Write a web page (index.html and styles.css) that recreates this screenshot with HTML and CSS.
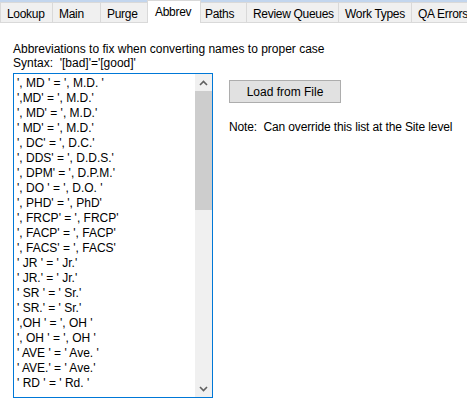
FILE: index.html
```html
<!DOCTYPE html>
<html>
<head>
<meta charset="utf-8">
<link rel="stylesheet" href="styles.css">
</head>
<body>
<div class="window">
  <div class="tabstrip">
    <div class="tab tab-first w-lookup">Lookup</div>
    <div class="tab w-main">Main</div>
    <div class="tab tab-noborder w-purge">Purge</div>
    <div class="tab tab-selected w-abbrev">Abbrev</div>
    <div class="tab tab-tight w-paths">Paths</div>
    <div class="tab w-review">Review Queues</div>
    <div class="tab w-work">Work Types</div>
    <div class="tab w-qa">QA Errors</div>
  </div>
  <div class="page">
    <div class="label">Abbreviations to fix when converting names to proper case</div>
    <div class="label">Syntax:&nbsp; '[bad]'='[good]'</div>
    <div class="row">
      <div class="listbox">
        <div class="items">
          <div class="item">', MD ' = ', M.D. '</div>
          <div class="item">',MD' = ', M.D.'</div>
          <div class="item">', MD' = ', M.D.'</div>
          <div class="item">' MD' = ', M.D.'</div>
          <div class="item">', DC' = ', D.C.'</div>
          <div class="item">', DDS' = ', D.D.S.'</div>
          <div class="item">', DPM' = ', D.P.M.'</div>
          <div class="item">', DO ' = ', D.O. '</div>
          <div class="item">', PHD' = ', PhD'</div>
          <div class="item">', FRCP' = ', FRCP'</div>
          <div class="item">', FACP' = ', FACP'</div>
          <div class="item">', FACS' = ', FACS'</div>
          <div class="item">' JR ' = ' Jr.'</div>
          <div class="item">' JR.' = ' Jr.'</div>
          <div class="item">' SR ' = ' Sr.'</div>
          <div class="item">' SR.' = ' Sr.'</div>
          <div class="item">',OH ' = ', OH '</div>
          <div class="item">', OH ' = ', OH '</div>
          <div class="item">' AVE ' = ' Ave. '</div>
          <div class="item">' AVE.' = ' Ave.'</div>
          <div class="item">' RD ' = ' Rd. '</div>
        </div>
        <div class="scrollbar">
          <div class="sb-btn">
            <svg width="9" height="6" viewBox="0 0 9 6"><path d="M1 5 L4.5 1.5 L8 5" fill="none" stroke="#606060" stroke-width="1.6"/></svg>
          </div>
          <div class="sb-thumb"></div>
          <div class="sb-track"></div>
          <div class="sb-btn">
            <svg width="9" height="6" viewBox="0 0 9 6"><path d="M1 1 L4.5 4.5 L8 1" fill="none" stroke="#606060" stroke-width="1.6"/></svg>
          </div>
        </div>
      </div>
      <div class="side">
        <button class="btn">Load from File</button>
        <div class="note">Note:&nbsp; Can override this list at the Site level</div>
      </div>
    </div>
  </div>
</div>
</body>
</html>
```

FILE: styles.css
```css
html, body {
  margin: 0;
  padding: 0;
  background: #ffffff;
}
body {
  width: 467px;
  height: 403px;
  overflow: hidden;
  font-family: "Liberation Sans", Arial, sans-serif;
  font-size: 12px;
  color: #000;
}
.window {
  width: 467px;
  height: 403px;
  display: flex;
  flex-direction: column;
  background: #fff;
}
.tabstrip {
  height: 22px;
  display: flex;
  align-items: flex-end;
  background: #c3d6ee;
  flex: none;
  white-space: nowrap;
}
.tab {
  box-sizing: border-box;
  height: 20px;
  background: #f0f0f0;
  border-top: 1px solid #d9d9d9;
  border-right: 1px solid #d9d9d9;
  padding-left: 6px;
  padding-top: 3px;
  line-height: 16px;
  letter-spacing: -0.3px;
  flex: none;
  overflow: hidden;
}
.tab-first { border-left: 1px solid #d9d9d9; padding-left: 6px; }
.tab-noborder { border-right: none; }
.tab-tight { padding-left: 4px; }
.tab-selected {
  height: 23px;
  margin-bottom: -1px;
  background: #fff;
  border-left: 1px solid #d9d9d9;
  border-right: 1px solid #d9d9d9;
  padding-left: 7px;
  padding-top: 3px;
  position: relative;
  z-index: 1;
}
.w-lookup { width: 53px; }
.w-main { width: 48px; }
.w-purge { width: 46px; }
.w-abbrev { width: 54px; }
.w-paths { width: 46px; }
.w-review { width: 92px; }
.w-work { width: 73px; }
.w-qa { width: 60px; }

.page {
  flex: 1;
  border-top: 1px solid #d9d9d9;
  padding: 19px 0 0 13px;
  background: #fff;
}
.label {
  line-height: 14px;
  height: 14px;
  white-space: nowrap;
}
.row {
  display: flex;
  margin-top: 3px;
  gap: 16px;
}
.listbox {
  box-sizing: border-box;
  width: 200px;
  height: 325px;
  border: 1px solid #0078d7;
  display: flex;
  flex: none;
}
.items {
  flex: 1;
  padding: 2px 0 0 3px;
  overflow: hidden;
}
.item {
  height: 15px;
  line-height: 15px;
  white-space: pre;
}
.scrollbar {
  width: 17px;
  flex: none;
  display: flex;
  flex-direction: column;
  background: #f0f0f0;
}
.sb-btn {
  height: 17px;
  flex: none;
  display: flex;
  align-items: center;
  justify-content: center;
}
.sb-thumb {
  height: 119px;
  flex: none;
  background: #cdcdcd;
}
.sb-track {
  flex: 1;
}
.side {
  display: flex;
  flex-direction: column;
  align-items: flex-start;
  padding-top: 7px;
}
.btn {
  box-sizing: border-box;
  width: 112px;
  height: 23px;
  background: #e1e1e1;
  border: 1px solid #adadad;
  border-radius: 0;
  font-family: inherit;
  font-size: 12px;
  color: #000;
  padding: 0;
  line-height: 20px;
}
.note {
  margin-top: 17px;
  line-height: 15px;
  letter-spacing: -0.13px;
  white-space: nowrap;
}
```
